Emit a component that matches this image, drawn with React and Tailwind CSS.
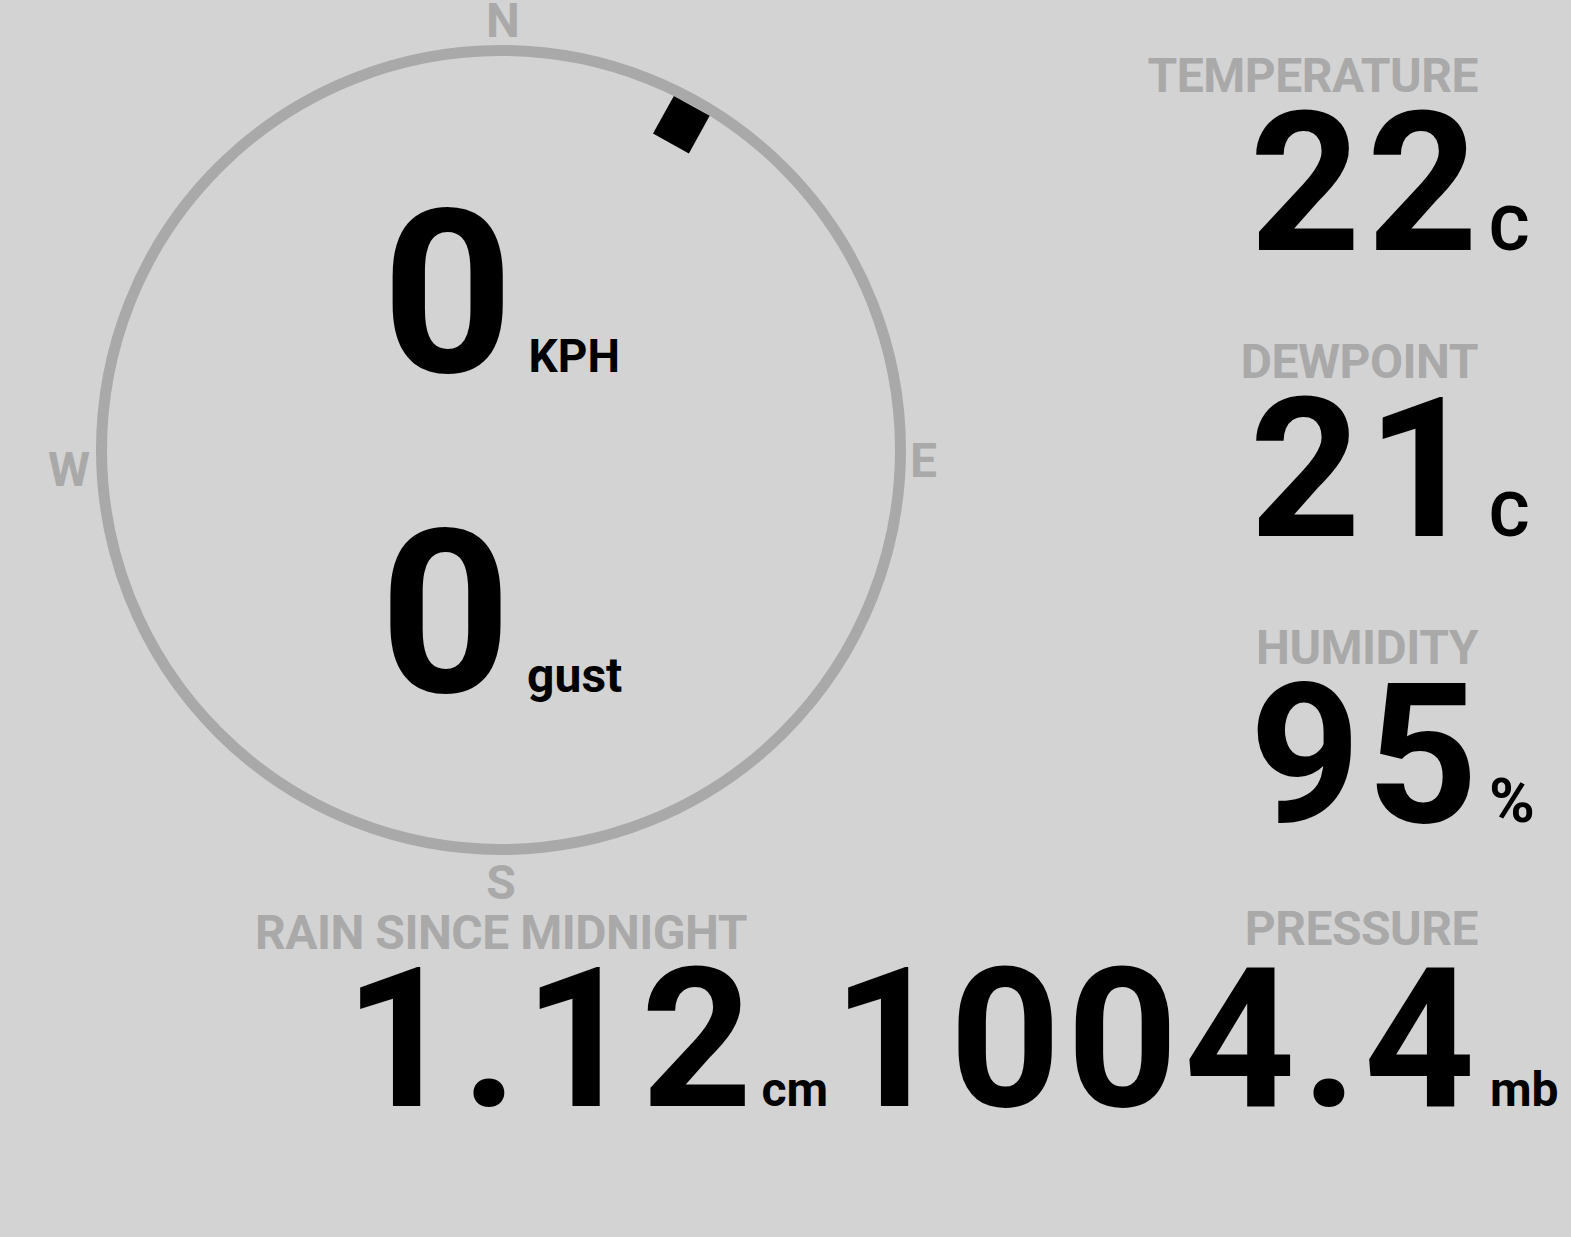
function Compass() {
  return (
    <div className="flex flex-col shrink-0">
      {/* N */}
      <div className="ml-[96px] w-[810px] pl-[4px] text-center text-[48px] leading-[42px] text-[#a9a9a9]">N</div>

      <div className="flex items-start mt-[3px]">
        <div className="w-[96px] pr-[6px] mt-[405px] text-right text-[48px] leading-[40px] text-[#a9a9a9]">W</div>

        {/* ring + direction marker */}
        <div className="relative w-[810px] h-[810px] shrink-0">
          <svg className="absolute inset-0" width="810" height="810" viewBox="0 0 810 810">
            <circle cx="405" cy="405" r="399.5" fill="none" stroke="#a9a9a9" strokeWidth="11" />
            <rect x="384.5" y="11.5" width="41" height="43" fill="#000" transform="rotate(29 405 405)" />
          </svg>
          <div className="relative flex flex-col items-center pt-[135px]">
            <div className="flex items-baseline">
              <span className="text-[229px] leading-none">0</span>
              <span className="ml-[15px] text-[46px] leading-none">KPH</span>
            </div>
            <div className="flex items-baseline mt-[91px]">
              <span className="text-[229px] leading-none">0</span>
              <span className="ml-[16px] text-[48px] leading-none">gust</span>
            </div>
          </div>
        </div>

        <div className="pl-[4px] mt-[396px] text-[48px] leading-[40px] text-[#a9a9a9]">E</div>
      </div>

      {/* S */}
      <div className="ml-[96px] w-[810px] mt-[8px] text-center text-[48px] leading-[40px] text-[#a9a9a9]">S</div>
    </div>
  );
}

function Stat({ label, value, unit }) {
  return (
    <div className="flex flex-col items-end">
      <div className="pr-[93px] text-[48px] leading-[40px] tracking-[-0.5px] text-[#a9a9a9]">{label}</div>
      <div className="mt-[13px] flex items-baseline">
        <span className="text-[194px] leading-[150px] tracking-[6px]">{value}</span>
        <span className="w-[87px] pl-[5px] text-[62px] leading-none">{unit}</span>
      </div>
    </div>
  );
}

export default function App() {
  const stats = [
    { label: 'TEMPERATURE', value: '22', unit: 'C' },
    { label: 'DEWPOINT', value: '21', unit: 'C' },
    { label: 'HUMIDITY', value: '95', unit: '%' }
  ];

  return (
    <div className="w-[1571px] h-[1237px] overflow-hidden bg-[#d3d3d3] text-black font-bold font-['Roboto','Liberation_Sans',sans-serif]">
      <div className="flex">
        <Compass />
        <div className="flex-1 flex flex-col items-end gap-[82px] pt-[56px]">
          {stats.map(s => (
            <Stat key={s.label} {...s} />
          ))}
        </div>
      </div>

      {/* rain + pressure */}
      <div className="flex items-end mt-[6px]">
        <div className="w-[828px] shrink-0 flex flex-col">
          <div className="w-[1002px] text-center text-[48px] leading-[40px] tracking-[-0.5px] text-[#a9a9a9]">RAIN SINCE MIDNIGHT</div>
          <div className="mt-[12px] flex items-baseline justify-end">
            <span className="text-[194px] leading-[150px] tracking-[6px]">1.12</span>
            <span className="ml-[3px] text-[48px] leading-none">cm</span>
          </div>
        </div>
        <div className="flex-1 flex flex-col items-end">
          <div className="pr-[93px] text-[48px] leading-[40px] tracking-[-0.5px] text-[#a9a9a9]">PRESSURE</div>
          <div className="mt-[16px] flex items-baseline">
            <span className="text-[194px] leading-[150px] tracking-[6px]">1004.4</span>
            <span className="w-[90px] pl-[9px] text-[48px] leading-none">mb</span>
          </div>
        </div>
      </div>
    </div>
  );
}
